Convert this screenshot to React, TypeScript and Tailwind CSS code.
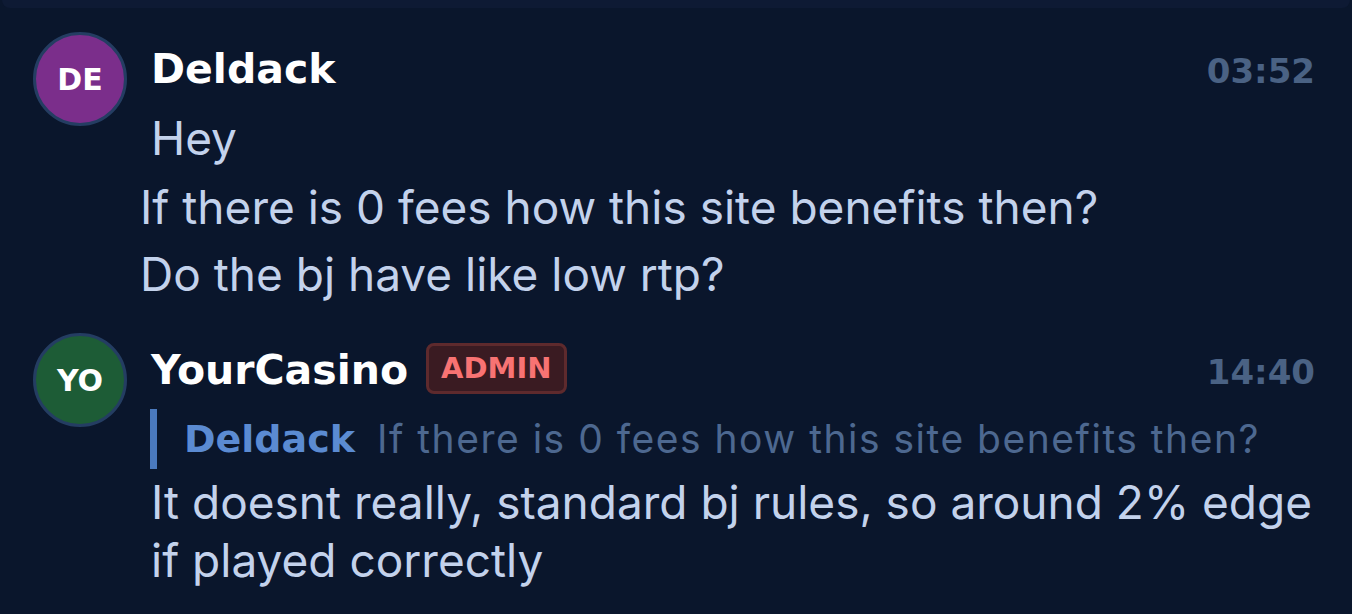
import React from "react";

const bold = "font-['DejaVu_Sans',sans-serif] font-bold";

const Avatar = ({ initials, color }: { initials: string; color: string }) => (
  <div
    className={`h-[94px] w-[94px] shrink-0 rounded-full border-[3px] border-[#243d62] flex items-center justify-center text-white text-[30px] ${bold} ${color}`}
  >
    {initials}
  </div>
);

export default function App() {
  return (
    <div className="min-h-screen w-full bg-[#0a162c] font-['Inter',sans-serif] overflow-hidden">
      {/* tail of the previous card */}
      <div className="h-2 mx-[2px] rounded-b-2xl bg-[#0e1a34]" />

      {/* Deldack */}
      <div className="flex items-start pl-[33px] pr-[37px] pt-[24px]">
        <Avatar initials="DE" color="bg-[#7b2e8b]" />
        <div className="flex-1 ml-[24px]">
          <div className="flex items-baseline justify-between mt-[13px] leading-[48px]">
            <span className={`text-white text-[41px] ${bold}`}>Deldack</span>
            <span className={`text-[#4a6284] text-[34px] ${bold}`}>03:52</span>
          </div>
          <p className="mt-[14px] text-[#c3d2ec] text-[46px] leading-[58px]">Hey</p>
        </div>
      </div>
      <p className="pl-[140px] mt-[11px] text-[#c3d2ec] text-[46px] leading-[58px]">
        If there is 0 fees how this site benefits then?
      </p>
      <p className="pl-[140px] mt-[9px] text-[#c3d2ec] text-[46px] leading-[58px]">
        Do the bj have like low rtp?
      </p>

      {/* YourCasino */}
      <div className="flex items-start pl-[33px] pr-[37px] mt-[30px]">
        <Avatar initials="YO" color="bg-[#1d5c36]" />
        <div className="flex-1 ml-[24px]">
          <div className="flex items-center justify-between mt-[10px] h-[51px]">
            <div className="flex items-center gap-[18px]">
              <span className={`text-white text-[41px] leading-[48px] pt-[3px] ${bold}`}>YourCasino</span>
              <span
                className={`h-[51px] px-[12px] flex items-center rounded-[8px] border-[3px] border-[#5e2a2d] bg-[#3a1b22] text-[#f87373] text-[29px] ${bold}`}
              >
                ADMIN
              </span>
            </div>
            <span className={`text-[#4a6284] text-[34px] leading-[40px] pt-[6px] ${bold}`}>14:40</span>
          </div>
          <div className="flex items-center mt-[15px] h-[60px] -ml-px">
            <div className="h-[60px] w-[7px] bg-[#4a79bd]" />
            <span className={`ml-[27px] text-[#5b8bd2] text-[38px] ${bold}`}>Deldack</span>
            <span className="ml-[22px] text-[#4d6890] text-[39px] tracking-[1.5px] whitespace-nowrap">
              If there is 0 fees how this site benefits then?
            </span>
          </div>
          <p className="mt-[4px] -mr-[6px] text-[#c3d2ec] text-[46px] leading-[58px]">
            It doesnt really, standard bj rules, so around 2% edge if played correctly
          </p>
        </div>
      </div>
    </div>
  );
}
